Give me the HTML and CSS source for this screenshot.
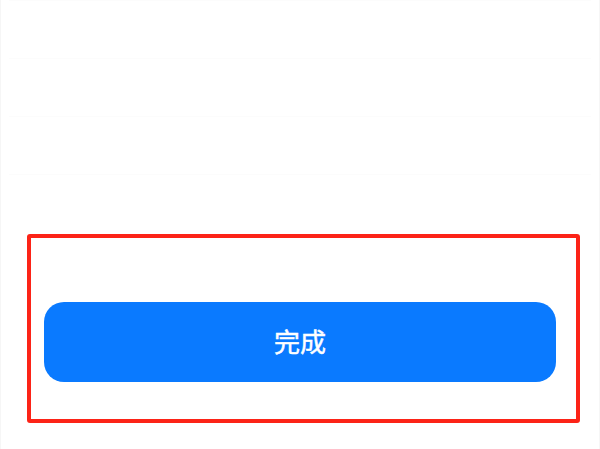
FILE: index.html
```html
<!DOCTYPE html>
<html lang="zh">
<head>
<meta charset="utf-8">
<link rel="stylesheet" href="styles.css">
</head>
<body>
<div class="page">
  <div class="list">
    <div class="row"></div>
    <div class="row"></div>
    <div class="row"></div>
    <div class="row"></div>
  </div>
  <div class="highlight">
    <button class="done">完成</button>
  </div>
</div>
</body>
</html>
```
FILE: styles.css
```css
html, body {
  margin: 0;
  padding: 0;
  background: #ffffff;
}
.page {
  width: 600px;
  height: 449px;
  box-sizing: border-box;
  border-left: 1px solid #f6f6f6;
  border-right: 1px solid #f6f6f6;
  margin: 0;
  overflow: hidden;
  font-family: "Noto Sans CJK SC", "Noto Sans", sans-serif;
}
.list {
  height: 234px;
  padding: 0 8px 0 8px;
  box-sizing: border-box;
}
.row {
  height: 58px;
  border-top: 1px solid #fcfcfc;
  box-sizing: border-box;
}
.highlight {
  margin-left: 26px;
  width: 553px;
  height: 189px;
  box-sizing: border-box;
  border: 4px solid #fc2317;
  border-radius: 3px;
  padding: 64px 20px 0 13px;
}
.done {
  display: flex;
  align-items: center;
  justify-content: center;
  width: 512px;
  height: 80px;
  border: none;
  border-radius: 20px;
  background: #0a7aff;
  color: #ffffff;
  font-family: "Noto Sans CJK SC", "Noto Sans", sans-serif;
  font-size: 26px;
  font-weight: 400;
  -webkit-text-stroke: 0.5px #ffffff;
  padding: 0 0 4px 0;
  margin: 0;
}
```
